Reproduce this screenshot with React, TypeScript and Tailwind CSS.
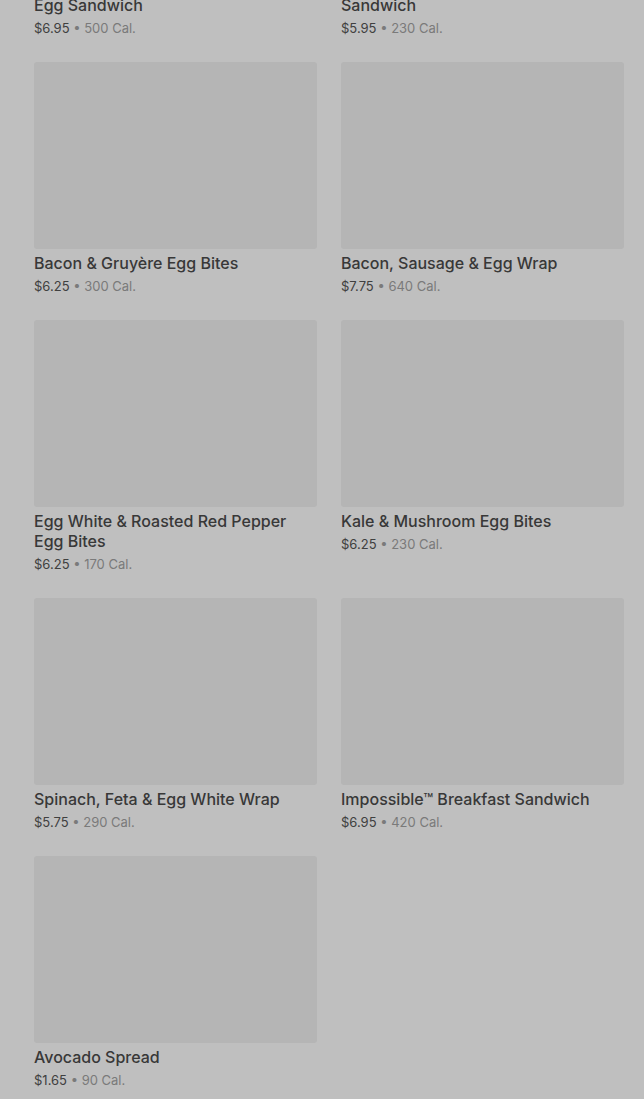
import React from "react";

interface Item {
  name: string;
  price: string;
  cal: string;
}

const items: Item[] = [
  { name: "Double-Smoked Bacon, Cheddar & Egg Sandwich", price: "$6.95", cal: "500 Cal." },
  { name: "Turkey Bacon, Cheddar & Egg White Sandwich", price: "$5.95", cal: "230 Cal." },
  { name: "Bacon & Gruyère Egg Bites", price: "$6.25", cal: "300 Cal." },
  { name: "Bacon, Sausage & Egg Wrap", price: "$7.75", cal: "640 Cal." },
  { name: "Egg White & Roasted Red Pepper Egg Bites", price: "$6.25", cal: "170 Cal." },
  { name: "Kale & Mushroom Egg Bites", price: "$6.25", cal: "230 Cal." },
  { name: "Spinach, Feta & Egg White Wrap", price: "$5.75", cal: "290 Cal." },
  { name: "Impossible™ Breakfast Sandwich", price: "$6.95", cal: "420 Cal." },
  { name: "Avocado Spread", price: "$1.65", cal: "90 Cal." },
];

function Card({ item }: { item: Item }) {
  return (
    <div className="flex flex-col">
      <div className="h-[187px] w-full rounded-[3px] bg-[#b5b5b5]" />
      <div className="mt-1 text-[16px] leading-5 font-medium text-[#383838]">{item.name}</div>
      <div className="mt-[3px] text-[13px] leading-5 text-[#404040]">
        {item.price}
        <span className="text-[#7a7a7a]"> • {item.cal}</span>
      </div>
    </div>
  );
}

export default function App() {
  return (
    <div
      className="h-[1099px] w-full overflow-hidden bg-[#bfbfbf]"
      style={{ fontFamily: "Inter, Roboto, sans-serif" }}
    >
      <div className="-mt-[216px] grid grid-cols-2 gap-x-6 gap-y-6 pl-[34px] pr-[20px]">
        {items.map((it) => (
          <Card key={it.name} item={it} />
        ))}
      </div>
    </div>
  );
}
